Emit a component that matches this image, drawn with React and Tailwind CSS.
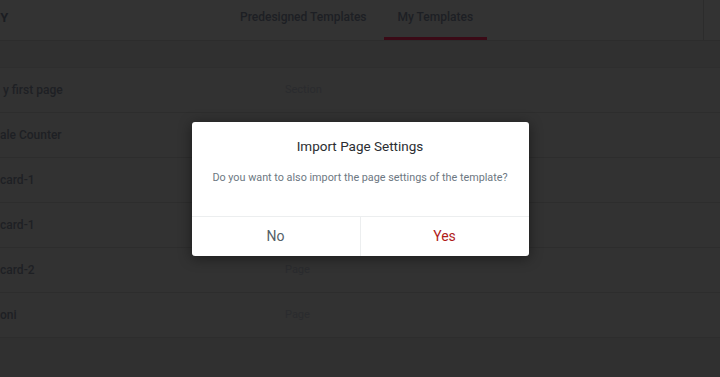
import React from 'react';

const rows = [
  { name: 'y first page', type: 'Section', indent: 'pl-[3px]' },
  { name: 'ale Counter', type: 'Page', indent: 'pl-0' },
  { name: 'card-1', type: 'Page', indent: 'pl-0' },
  { name: 'card-1', type: 'Page', indent: 'pl-0' },
  { name: 'card-2', type: 'Page', indent: 'pl-0' },
  { name: 'oni', type: 'Page', indent: 'pl-0' },
];

const App = () => {
  return (
    <div className="relative w-[720px] h-[377px] overflow-hidden bg-[#303030] font-['Roboto',sans-serif]">
      {/* Header */}
      <div className="h-[41px] flex items-stretch bg-[#333333] border-b border-[#2c2c2c]">
        <div className="w-[226px] flex items-start pt-[8px]">
          <span className="ml-[-46px] text-[13px] font-bold text-[#1b1d22] tracking-wide">LIBRARY</span>
        </div>
        <div className="flex gap-[3px]">
          <div className="px-[14px] pt-[8px] text-[12px] font-medium text-[#1d1f24]">
            Predesigned Templates
          </div>
          <div className="px-[14px] pt-[8px] text-[12px] font-medium text-[#1d1f24] border-b-[3px] border-[#3a0a16]">
            My Templates
          </div>
        </div>
        <div className="flex-1" />
        <div className="w-[17px] border-l border-[#2c2c2c]" />
      </div>

      {/* List */}
      <div className="mt-[26px] border-t border-[#2e2e2e] bg-[#323232]">
        {rows.map((r, i) => (
          <div key={i} className="h-[45px] flex items-center border-b border-[#2d2d2d]">
            <div className={`w-[285px] text-[12px] font-medium text-[#1e2024] ${r.indent}`}>{r.name}</div>
            <div className="text-[11px] text-[#2a2b2e]">{r.type}</div>
          </div>
        ))}
      </div>

      {/* Modal */}
      <div className="absolute inset-0 flex items-center justify-center">
        <div className="w-[337px] h-[134px] bg-white rounded-[3px] shadow-[0_2px_14px_rgba(0,0,0,0.45)] flex flex-col">
          <div className="flex-1 flex flex-col items-center pt-[14px]">
            <div className="text-[13.5px] text-[#2b2d31]">Import Page Settings</div>
            <div className="mt-[14px] text-[10.8px] text-[#6d7882]">Do you want to also import the page settings of the template?</div>
          </div>
          <div className="h-[40px] flex border-t border-[#eceeef]">
            <button className="flex-1 text-[14px] text-[#556068]">No</button>
            <button className="flex-1 text-[14px] text-[#b01b1b] border-l border-[#eceeef]">Yes</button>
          </div>
        </div>
      </div>
    </div>
  );
};

export default App;
